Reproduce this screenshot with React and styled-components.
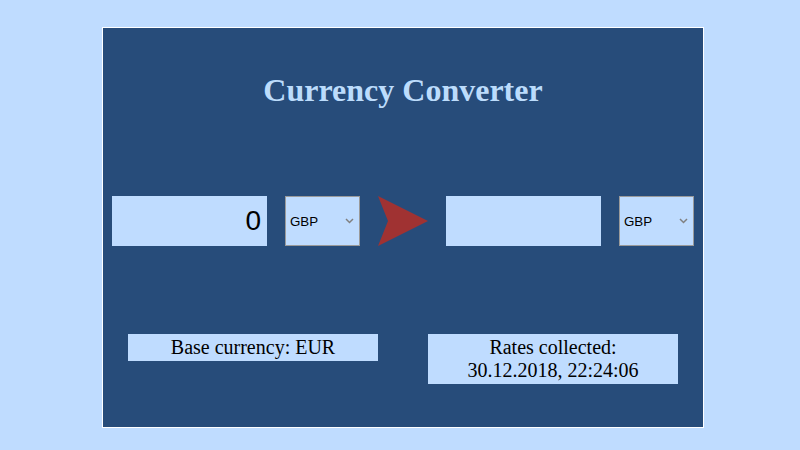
import React from "react";
import styled, { createGlobalStyle } from "styled-components";

const Global = createGlobalStyle`
  html, body { margin: 0; padding: 0; background: #bfdcff; }
  body { width: 800px; height: 450px; overflow: hidden; font-family: "Liberation Serif", "Times New Roman", serif; }
`;

const Panel = styled.main`
  box-sizing: content-box;
  width: 600px;
  height: 399px;
  margin: 27px 0 0 102px;
  background: #274c7a;
  border: 1px solid #ffffff;
  display: flex;
  flex-direction: column;
  align-items: center;
`;

const Title = styled.h1`
  margin: 44px 0 0;
  font-family: "Liberation Serif", "Times New Roman", serif;
  font-weight: bold;
  font-size: 32px;
  line-height: 37px;
  color: #bcdcfc;
`;

const Row = styled.div`
  margin-top: 87px;
  display: flex;
  align-items: center;
  gap: 18px;
`;

const Amount = styled.input`
  box-sizing: border-box;
  width: 155px;
  height: 50px;
  border: none;
  outline: none;
  background: #bfdcff;
  text-align: right;
  padding: 0 6px 0 4px;
  font-family: "Liberation Sans", Arial, sans-serif;
  font-size: 28px;
  color: #000;
`;

const SelectWrap = styled.div`
  position: relative;
  width: 75px;
  height: 50px;
`;

const Select = styled.select`
  appearance: none;
  box-sizing: border-box;
  width: 75px;
  height: 50px;
  margin: 0;
  border: 1px solid #9a9a9a;
  background: #bfdcff;
  padding: 0 0 0 4px;
  font-family: "Liberation Sans", Arial, sans-serif;
  font-size: 13.333px;
  color: #000;
  outline: none;
`;

const Chevron = styled.svg`
  position: absolute;
  right: 6px;
  top: 22px;
  width: 9px;
  height: 6px;
  pointer-events: none;
`;

const Arrow = styled.svg`
  display: block;
  width: 50px;
  height: 50px;
`;

const Footer = styled.div`
  margin-top: 88px;
  display: grid;
  grid-template-columns: 300px 300px;
  align-items: start;
  justify-items: center;
`;

const InfoBox = styled.div`
  box-sizing: border-box;
  width: 250px;
  padding: 2px 4px;
  background: #bfdcff;
  color: #000;
  text-align: center;
  font-family: "Liberation Serif", "Times New Roman", serif;
  font-size: 20px;
  line-height: 23px;
`;

function CurrencySelect() {
  return (
    <SelectWrap>
      <Select defaultValue="GBP">
        <option>GBP</option>
        <option>EUR</option>
        <option>USD</option>
      </Select>
      <Chevron viewBox="0 0 9 6">
        <path d="M1 1 L4.5 4.5 L8 1" fill="none" stroke="#808080" strokeWidth="1.5" />
      </Chevron>
    </SelectWrap>
  );
}

export default function App() {
  return (
    <>
      <Global />
      <Panel>
        <Title>Currency Converter</Title>
        <Row>
          <Amount defaultValue="0" />
          <CurrencySelect />
          <Arrow viewBox="0 0 50 50">
            <polygon points="0,0 50,25 0,50 10,25" fill="#a03232" />
          </Arrow>
          <Amount defaultValue="" />
          <CurrencySelect />
        </Row>
        <Footer>
          <InfoBox>Base currency: EUR</InfoBox>
          <InfoBox>
            Rates collected:
            <br />
            30.12.2018, 22:24:06
          </InfoBox>
        </Footer>
      </Panel>
    </>
  );
}
